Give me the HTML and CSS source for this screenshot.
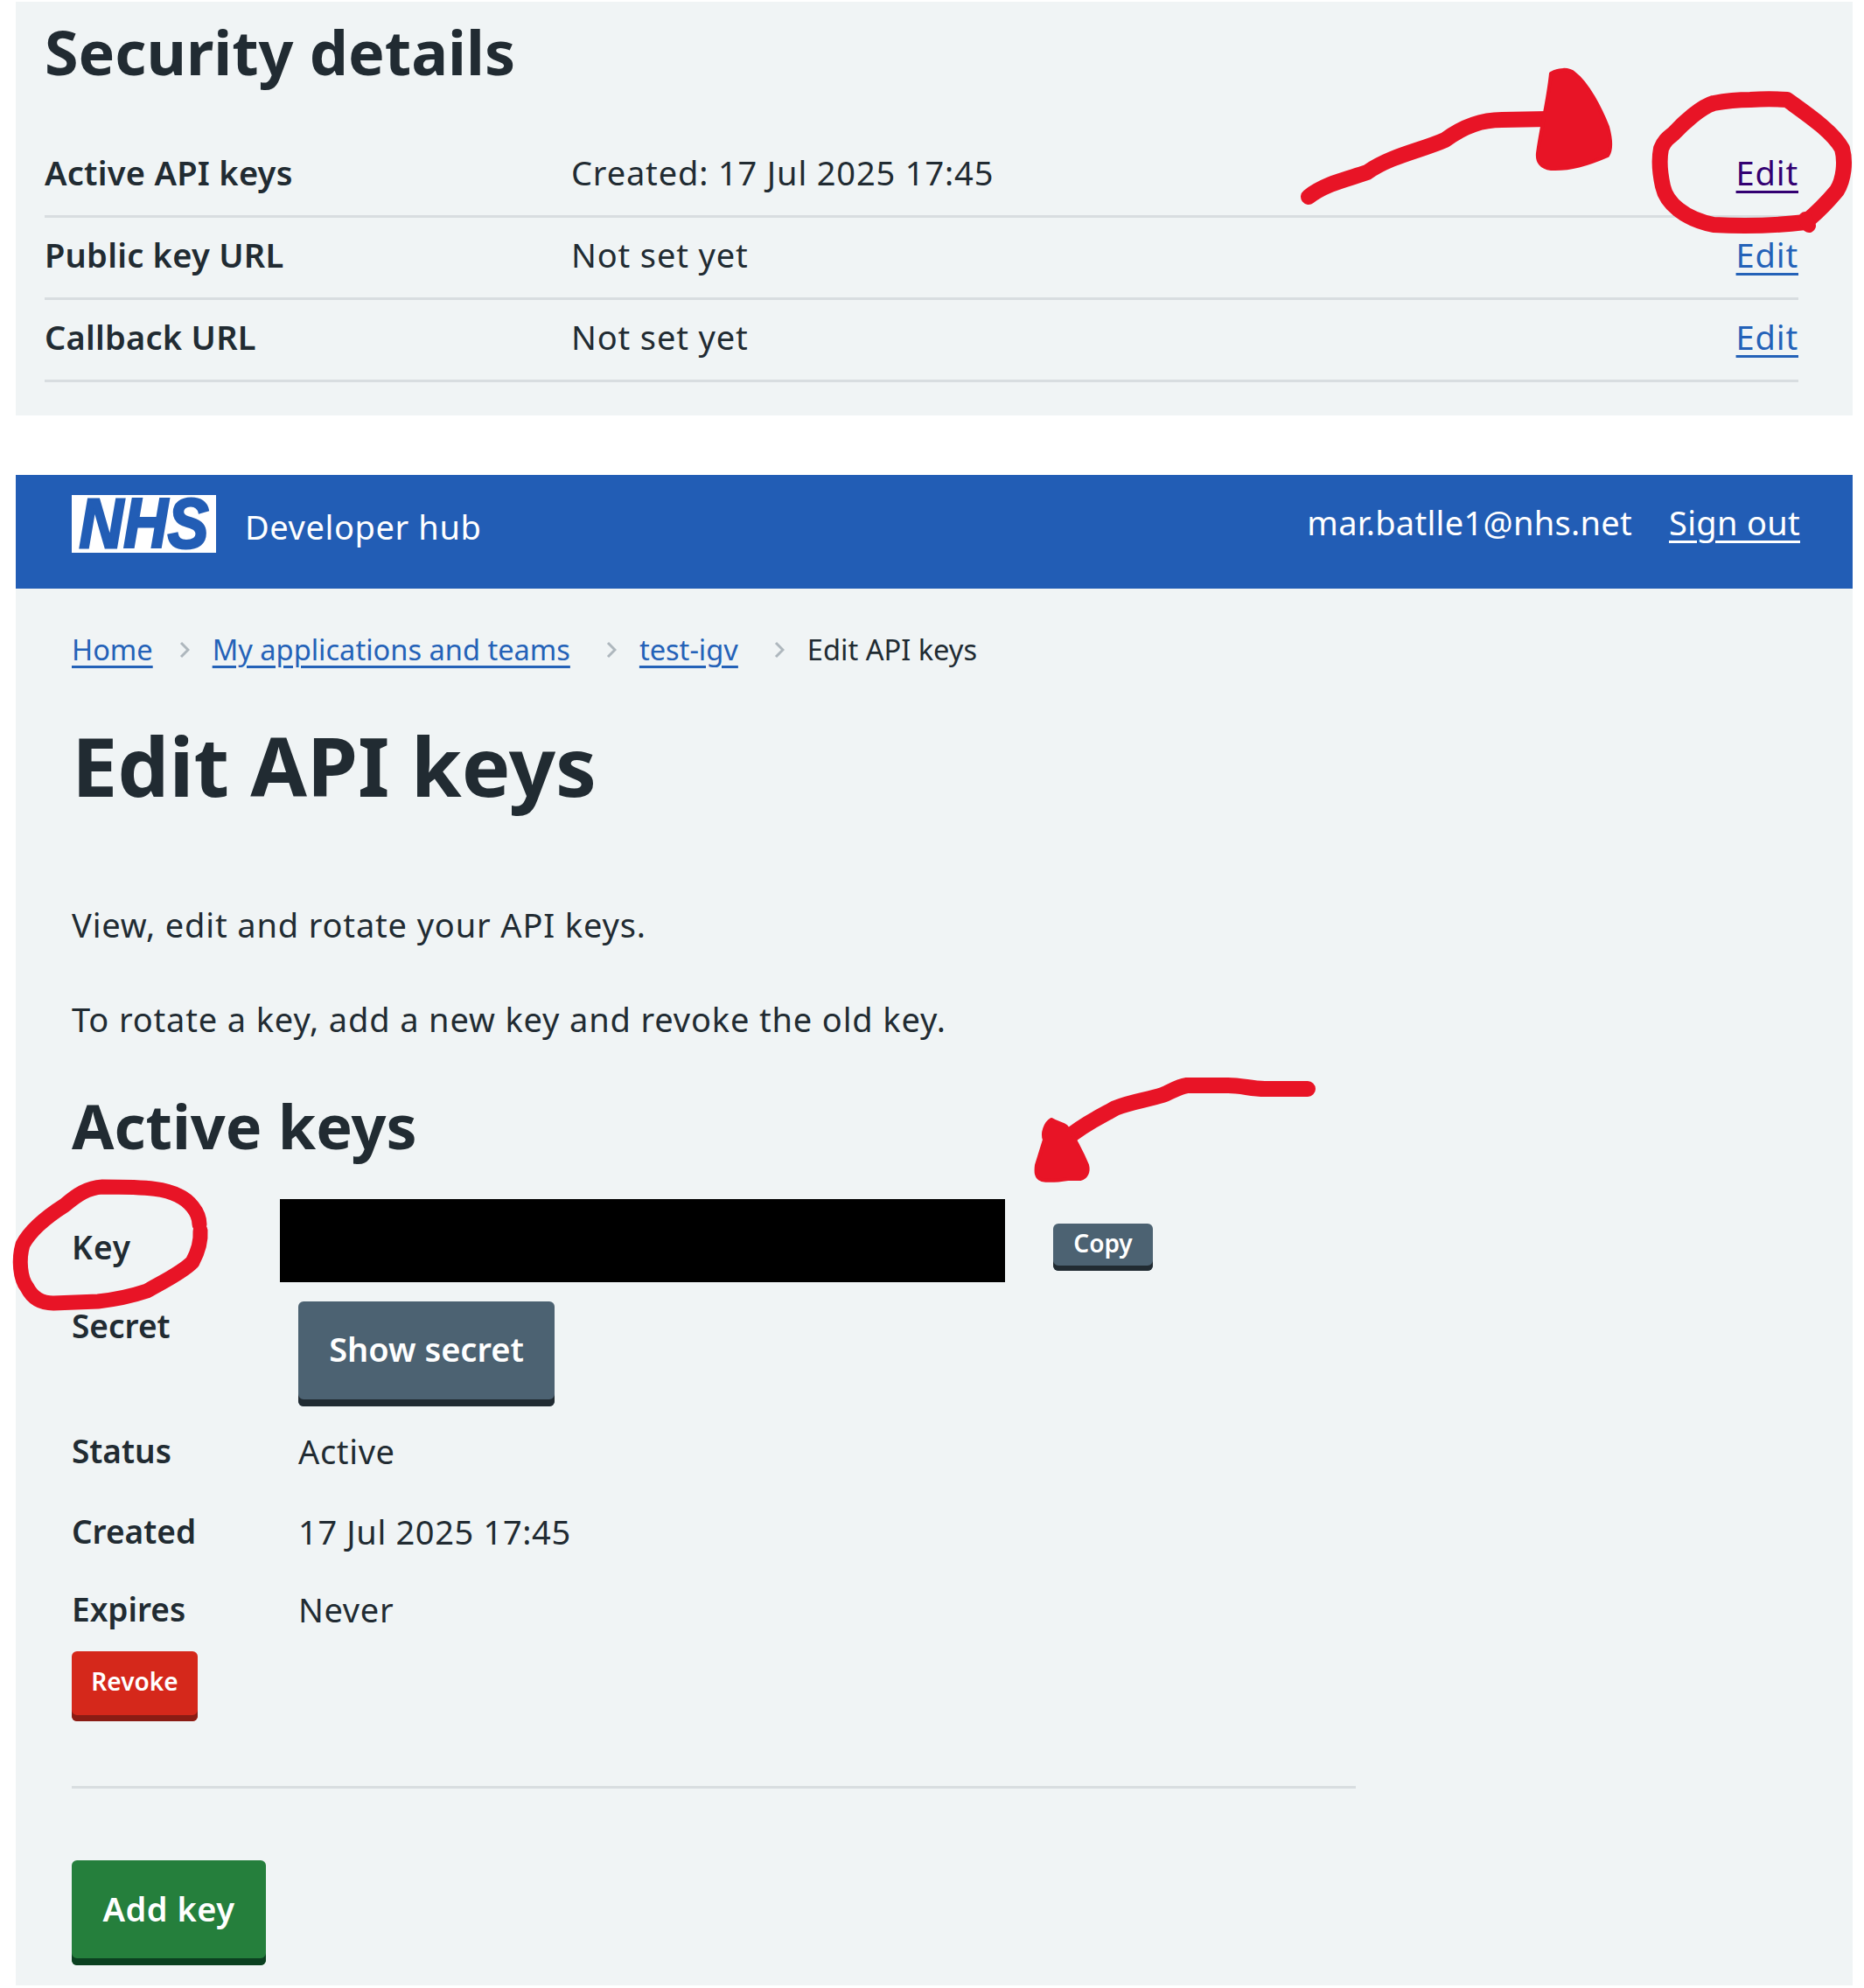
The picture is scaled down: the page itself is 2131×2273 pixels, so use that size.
FILE: index.html
```html
<!DOCTYPE html>
<html lang="en">
<head>
<meta charset="utf-8">
<title>Edit API keys</title>
<link rel="stylesheet" href="styles.css">
</head>
<body>
<section class="panel security">
  <h2 class="security-title">Security details</h2>
  <dl class="summary">
    <div class="summary-row"><dt>Active API keys</dt><dd>Created: 17 Jul 2025 17:45</dd><dd class="summary-action"><a class="link visited" href="#">Edit</a></dd></div>
    <div class="summary-row"><dt>Public key URL</dt><dd>Not set yet</dd><dd class="summary-action"><a class="link" href="#">Edit</a></dd></div>
    <div class="summary-row"><dt>Callback URL</dt><dd>Not set yet</dd><dd class="summary-action"><a class="link" href="#">Edit</a></dd></div>
  </dl>
</section>

<div class="panel app">
  <header class="masthead">
    <div class="logo"><span class="logo-text">NHS</span></div>
    <span class="service">Developer hub</span>
    <span class="user">mar.batlle1@nhs.net</span>
    <a class="signout" href="#">Sign out</a>
  </header>

  <main class="content">
    <nav class="crumbs">
      <a class="link" href="#">Home</a>
      <svg class="chev" viewBox="0 0 12 20"><path d="M2 2l8 8-8 8"/></svg>
      <a class="link" href="#">My applications and teams</a>
      <svg class="chev chev-wide" viewBox="0 0 12 20"><path d="M2 2l8 8-8 8"/></svg>
      <a class="link" href="#">test-igv</a>
      <svg class="chev chev-wide" viewBox="0 0 12 20"><path d="M2 2l8 8-8 8"/></svg>
      <span>Edit API keys</span>
    </nav>
    <h1 class="page-title">Edit API keys</h1>
    <p class="intro">View, edit and rotate your API keys.</p>
    <p class="intro second">To rotate a key, add a new key and revoke the old key.</p>
    <h2 class="section-title">Active keys</h2>

    <div class="key-row">
      <span class="label key-label">Key</span>
      <div class="redacted"></div>
      <button class="btn btn-grey btn-small copy">Copy</button>
    </div>
    <div class="row secret-row">
      <span class="label wide secret-label">Secret</span>
      <button class="btn btn-grey btn-large show">Show secret</button>
    </div>
    <div class="row status-row"><span class="label wide">Status</span><span class="value">Active</span></div>
    <div class="row created-row"><span class="label wide">Created</span><span class="value">17 Jul 2025 17:45</span></div>
    <div class="row expires-row"><span class="label wide">Expires</span><span class="value">Never</span></div>
    <button class="btn btn-red btn-small revoke">Revoke</button>
    <hr class="rule">
    <button class="btn btn-green btn-large add">Add key</button>
  </main>
</div>

<svg class="annotations" viewBox="0 0 2131 2273" aria-hidden="true">
  <path class="ink" d="M1496 225C1515 210 1540 205 1563 197C1590 178 1625 172 1652 160C1675 143 1695 137 1717 137L1770 136"/>
  <path class="ink-fill" d="M1773 84C1782 79 1793 78 1800 84C1815 95 1830 125 1838 145C1842 160 1842 172 1838 178C1815 188 1795 194 1773 193C1762 192 1757 185 1758 175C1762 145 1770 115 1773 84Z"/>
  <path class="ink" d="M2001 114C2015 113 2030 113 2043 114C2065 130 2095 150 2106 170C2110 185 2108 205 2100 218C2090 230 2075 245 2064 254C2030 258 1995 259 1959 257C1925 250 1905 232 1901 213C1897 195 1897 180 1899 170C1903 160 1908 157 1913 153C1925 140 1945 122 1959 118C1975 115 1990 114 2001 114Z"/>
  <path class="ink-thin" d="M2064 250L2068 258"/>
  <path class="ink" d="M1495 1245L1446 1245C1430 1245 1420 1241 1404 1241L1357 1241C1345 1243 1338 1249 1329 1252C1310 1258 1295 1259 1275 1267C1260 1276 1240 1284 1218 1303"/>
  <path class="ink-fill" d="M1202 1280C1208 1284 1215 1284 1219 1288C1226 1296 1238 1320 1243 1332C1245 1340 1242 1346 1235 1348L1221 1348C1208 1350 1196 1350 1191 1349C1184 1346 1184 1340 1185 1332L1194 1303C1191 1296 1195 1284 1202 1280Z"/>
  <path class="ink-key" d="M228 1400C228 1385 215 1372 204 1367C190 1360 175 1357 117 1357C100 1358 88 1366 74 1378C52 1392 34 1408 26 1423C21 1440 23 1462 31 1472C38 1486 50 1490 61 1490L112 1488C130 1486 150 1482 168 1476C185 1466 207 1456 220 1443C227 1430 230 1420 229 1407"/>
</svg>
</body>
</html>
```

FILE: styles.css
```css
* { box-sizing: border-box; }

html, body { margin: 0; padding: 0; background: #fff; }

body {
  position: relative;
  width: 2131px;
  height: 2273px;
  padding: 2px 13px 0 18px;
  font-family: "Noto Sans", "Open Sans", sans-serif;
  font-size: 38px;
  line-height: 48px;
  letter-spacing: 0.85px;
  color: #212b32;
  overflow: hidden;
}

.panel { background: #f0f4f5; }

/* top crop */
.security { height: 473px; padding: 25px 62px 0 33px; }

.security-title {
  margin: 0;
  font-size: 70px;
  line-height: 64px;
  font-weight: 700;
  letter-spacing: 0;
}

.summary { margin: 64px 0 0; }

.summary-row {
  display: flex;
  height: 94px;
  padding-bottom: 8px;
  align-items: center;
  border-bottom: 3px solid #d8dde0;
}

.summary-row dt { width: 602px; font-weight: 600; letter-spacing: 0.25px; }
.summary-row dd { margin: 0; }
.summary-row .summary-action { margin-left: auto; }

.link { color: #2462b8; text-decoration: underline; text-underline-offset: 6px; text-decoration-thickness: 3px; }
.link.visited { color: #330072; }

/* second crop */
.app { margin-top: 68px; height: 1727px; }

.masthead {
  display: flex;
  align-items: center;
  height: 130px;
  padding: 0 60px 22px 64px;
  background: #225db5;
  color: #fff;
  letter-spacing: 0.3px;
}

.logo {
  display: flex;
  justify-content: center;
  align-items: center;
  width: 165px;
  height: 66px;
  flex: none;
  margin-bottom: -4px;
  background: #fff;
}

.logo-text {
  display: block;
  font-family: "Liberation Sans", sans-serif;
  font-size: 70px;
  line-height: 66px;
  font-weight: 700;
  font-style: italic;
  letter-spacing: 0;
  color: #225db5;
  -webkit-text-stroke: 2.5px #225db5;
  transform: scaleY(1.14);
}

.service { margin-left: 33px; padding-top: 10px; letter-spacing: 0.6px; }
.user { margin-left: auto; }
.signout { margin-left: 42px; color: #fff; text-underline-offset: 6px; text-decoration-thickness: 3px; }

.content { padding: 48px 0 0 64px; }

.crumbs {
  display: flex;
  align-items: center;
  height: 44px;
  font-size: 32.6px;
  letter-spacing: 0;
}

.chev { width: 12px; height: 20px; margin: 0 26px 0 30px; flex: none; }
.chev-wide { margin-left: 41px; }
.chev path { fill: none; stroke: #aeb7bd; stroke-width: 3; }

.page-title {
  margin: 55px 0 0;
  font-size: 93.5px;
  line-height: 110px;
  font-weight: 700;
  letter-spacing: 0;
}

.intro { margin: 103px 0 0; }
.intro.second { margin-top: 60px; }

.section-title {
  margin: 56px 0 0;
  font-size: 70px;
  line-height: 84px;
  font-weight: 700;
  letter-spacing: 0;
}

.key-row { display: flex; align-items: flex-start; margin-top: 42px; height: 95px; }
.label { font-weight: 600; letter-spacing: 0; font-size: 37px; }
.key-label { width: 238px; padding-top: 31px; letter-spacing: 1px; }
.redacted { width: 829px; height: 95px; background: #000; }
.copy { margin: 28px 0 0 55px; }

.row { display: flex; align-items: flex-start; }
.wide { width: 259px; }
.value { letter-spacing: 0.65px; }
.secret-label { padding-top: 4px; }
.secret-row { margin-top: 22px; }
.status-row { margin-top: 27px; }
.created-row { margin-top: 44px; }
.expires-row { margin-top: 41px; }

.btn {
  display: block;
  border: 0;
  border-radius: 6px;
  color: #fff;
  font-family: inherit;
  font-weight: 600;
  padding: 0;
  letter-spacing: 0;
}

.btn-small { height: 54px; font-size: 28px; line-height: 44px; padding-bottom: 12px; }
.btn-large { height: 120px; font-size: 38px; line-height: 48px; padding-bottom: 12px; }

.btn-grey { background: #4c6272; box-shadow: inset 0 -8px 0 #212b32; }
.btn-red { background: #d5281b; box-shadow: inset 0 -8px 0 #8a1c14; }
.btn-green { background: #257f3c; box-shadow: inset 0 -8px 0 #0b4020; }

.copy { width: 114px; box-shadow: inset 0 -6px 0 #212b32; }
.show { width: 293px; }
.revoke { width: 144px; height: 80px; margin-top: 24px; box-shadow: inset 0 -7px 0 #8a1c14; padding-bottom: 12px; }
.add { width: 222px; letter-spacing: 0.5px; padding-bottom: 11px; }

.rule {
  width: 1468px;
  height: 3px;
  margin: 74px 0 82px;
  border: 0;
  background: #d8dde0;
}

/* hand-drawn annotations over the screenshot */
.annotations { position: absolute; left: 0; top: 0; width: 2131px; height: 2273px; pointer-events: none; }
.ink, .ink-key, .ink-thin { fill: none; stroke: #e81426; stroke-linecap: round; stroke-linejoin: round; }
.ink { stroke-width: 18px; }
.ink-key { stroke-width: 17px; }
.ink-thin { stroke-width: 16px; }
.ink-fill { fill: #e81426; stroke: #e81426; stroke-width: 4px; stroke-linejoin: round; }
```
